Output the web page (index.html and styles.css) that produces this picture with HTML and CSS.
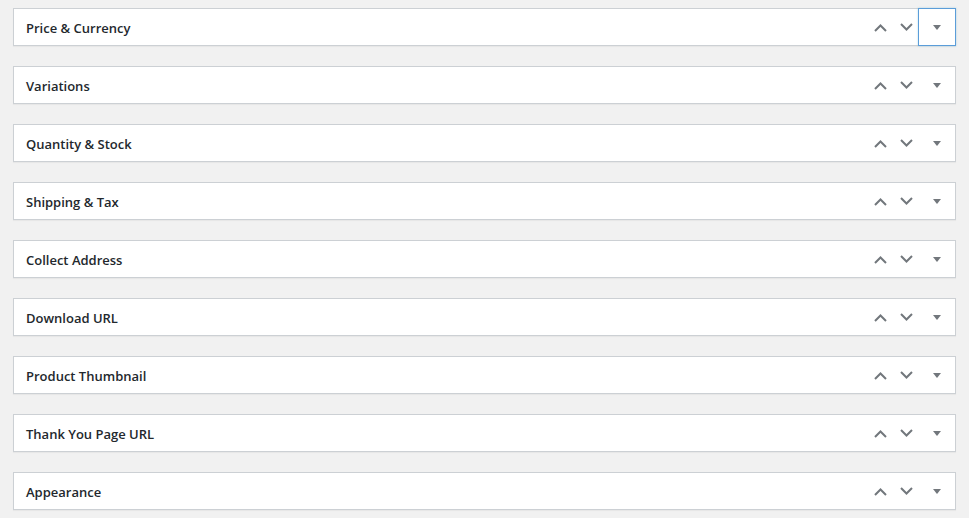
FILE: index.html
```html
<!DOCTYPE html>
<html lang="en">
<head>
    <meta charset="UTF-8">
    <meta name="viewport" content="width=device-width, initial-scale=1.0">
    <title>Product Settings</title>
    <link rel="stylesheet" href="styles.css">
</head>
<body>
    <div class="meta-boxes">
        <div class="postbox">
            <h2 class="hndle">Price &amp; Currency</h2>
            <div class="handle-actions">
                <button class="handle-order higher" aria-label="Move up"><svg width="13" height="9" viewBox="0 0 13 9"><polyline points="1,8 6.5,2.5 12,8"/></svg></button>
                <button class="handle-order lower" aria-label="Move down"><svg width="13" height="9" viewBox="0 0 13 9"><polyline points="1,1 6.5,6.5 12,1"/></svg></button>
                <button class="handlediv focused" aria-label="Toggle panel"><span class="toggle-indicator"></span></button>
            </div>
        </div>

        <div class="postbox">
            <h2 class="hndle">Variations</h2>
            <div class="handle-actions">
                <button class="handle-order higher" aria-label="Move up"><svg width="13" height="9" viewBox="0 0 13 9"><polyline points="1,8 6.5,2.5 12,8"/></svg></button>
                <button class="handle-order lower" aria-label="Move down"><svg width="13" height="9" viewBox="0 0 13 9"><polyline points="1,1 6.5,6.5 12,1"/></svg></button>
                <button class="handlediv" aria-label="Toggle panel"><span class="toggle-indicator"></span></button>
            </div>
        </div>

        <div class="postbox">
            <h2 class="hndle">Quantity &amp; Stock</h2>
            <div class="handle-actions">
                <button class="handle-order higher" aria-label="Move up"><svg width="13" height="9" viewBox="0 0 13 9"><polyline points="1,8 6.5,2.5 12,8"/></svg></button>
                <button class="handle-order lower" aria-label="Move down"><svg width="13" height="9" viewBox="0 0 13 9"><polyline points="1,1 6.5,6.5 12,1"/></svg></button>
                <button class="handlediv" aria-label="Toggle panel"><span class="toggle-indicator"></span></button>
            </div>
        </div>

        <div class="postbox">
            <h2 class="hndle">Shipping &amp; Tax</h2>
            <div class="handle-actions">
                <button class="handle-order higher" aria-label="Move up"><svg width="13" height="9" viewBox="0 0 13 9"><polyline points="1,8 6.5,2.5 12,8"/></svg></button>
                <button class="handle-order lower" aria-label="Move down"><svg width="13" height="9" viewBox="0 0 13 9"><polyline points="1,1 6.5,6.5 12,1"/></svg></button>
                <button class="handlediv" aria-label="Toggle panel"><span class="toggle-indicator"></span></button>
            </div>
        </div>

        <div class="postbox">
            <h2 class="hndle">Collect Address</h2>
            <div class="handle-actions">
                <button class="handle-order higher" aria-label="Move up"><svg width="13" height="9" viewBox="0 0 13 9"><polyline points="1,8 6.5,2.5 12,8"/></svg></button>
                <button class="handle-order lower" aria-label="Move down"><svg width="13" height="9" viewBox="0 0 13 9"><polyline points="1,1 6.5,6.5 12,1"/></svg></button>
                <button class="handlediv" aria-label="Toggle panel"><span class="toggle-indicator"></span></button>
            </div>
        </div>

        <div class="postbox">
            <h2 class="hndle">Download URL</h2>
            <div class="handle-actions">
                <button class="handle-order higher" aria-label="Move up"><svg width="13" height="9" viewBox="0 0 13 9"><polyline points="1,8 6.5,2.5 12,8"/></svg></button>
                <button class="handle-order lower" aria-label="Move down"><svg width="13" height="9" viewBox="0 0 13 9"><polyline points="1,1 6.5,6.5 12,1"/></svg></button>
                <button class="handlediv" aria-label="Toggle panel"><span class="toggle-indicator"></span></button>
            </div>
        </div>

        <div class="postbox">
            <h2 class="hndle">Product Thumbnail</h2>
            <div class="handle-actions">
                <button class="handle-order higher" aria-label="Move up"><svg width="13" height="9" viewBox="0 0 13 9"><polyline points="1,8 6.5,2.5 12,8"/></svg></button>
                <button class="handle-order lower" aria-label="Move down"><svg width="13" height="9" viewBox="0 0 13 9"><polyline points="1,1 6.5,6.5 12,1"/></svg></button>
                <button class="handlediv" aria-label="Toggle panel"><span class="toggle-indicator"></span></button>
            </div>
        </div>

        <div class="postbox">
            <h2 class="hndle">Thank You Page URL</h2>
            <div class="handle-actions">
                <button class="handle-order higher" aria-label="Move up"><svg width="13" height="9" viewBox="0 0 13 9"><polyline points="1,8 6.5,2.5 12,8"/></svg></button>
                <button class="handle-order lower" aria-label="Move down"><svg width="13" height="9" viewBox="0 0 13 9"><polyline points="1,1 6.5,6.5 12,1"/></svg></button>
                <button class="handlediv" aria-label="Toggle panel"><span class="toggle-indicator"></span></button>
            </div>
        </div>

        <div class="postbox">
            <h2 class="hndle">Appearance</h2>
            <div class="handle-actions">
                <button class="handle-order higher" aria-label="Move up"><svg width="13" height="9" viewBox="0 0 13 9"><polyline points="1,8 6.5,2.5 12,8"/></svg></button>
                <button class="handle-order lower" aria-label="Move down"><svg width="13" height="9" viewBox="0 0 13 9"><polyline points="1,1 6.5,6.5 12,1"/></svg></button>
                <button class="handlediv" aria-label="Toggle panel"><span class="toggle-indicator"></span></button>
            </div>
        </div>
    </div>
</body>
</html>
```

FILE: styles.css
```css
body {
    font-family: "Open Sans", "Noto Sans", sans-serif;
    background-color: #f1f1f1;
    color: #23282d;
    margin: 0;
    padding: 8px 13px;
}

.meta-boxes {
    display: flex;
    flex-direction: column;
    gap: 20px;
}

.postbox {
    display: flex;
    align-items: center;
    height: 36px;
    background-color: #fff;
    border: 1px solid #ccd0d4;
    box-shadow: 0 1px 1px rgba(0, 0, 0, 0.04);
}

.hndle {
    flex: 1;
    margin: 0;
    padding: 2px 12px 0;
    font-size: 13px;
    font-weight: 600;
    line-height: 34px;
}

.handle-actions {
    display: flex;
    height: 36px;
}

.handle-actions button {
    display: flex;
    align-items: center;
    justify-content: center;
    height: 36px;
    padding: 0;
    margin: 0;
    border: none;
    background: none;
    cursor: pointer;
}

.handle-order {
    width: 26px;
}

.handle-order svg polyline {
    fill: none;
    stroke: #72777c;
    stroke-width: 2;
}

.handlediv {
    width: 36px;
}

.handlediv.focused {
    box-shadow: 0 0 0 1px #5b9dd9, 0 0 2px 1px rgba(30, 140, 190, 0.3);
}

.toggle-indicator {
    width: 0;
    height: 0;
    border-left: 4px solid transparent;
    border-right: 4px solid transparent;
    border-top: 5px solid #72777c;
}
```
